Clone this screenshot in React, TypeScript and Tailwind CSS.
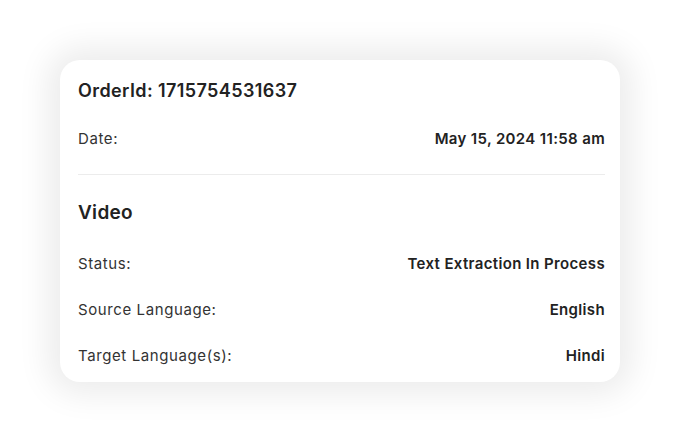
import React from 'react';

interface DetailRowProps {
  label: string;
  value: string;
  className?: string;
}

function DetailRow({ label, value, className = '' }: DetailRowProps) {
  return (
    <div className={`flex items-center justify-between h-5 ${className}`}>
      <span className="text-[15px] tracking-[0.6px] text-[#333333]">{label}</span>
      <span className="text-[15px] font-semibold tracking-[0.35px] text-[#222222]">{value}</span>
    </div>
  );
}

export default function App() {
  return (
    <div
      className="min-h-screen w-full bg-white flex items-center justify-center"
      style={{ fontFamily: 'Inter, "Open Sans", sans-serif' }}
    >
      <div className="w-[560px] h-[322px] bg-white rounded-[20px] shadow-[0_0_32px_12px_rgba(0,0,0,0.08)] pl-[18px] pr-[15px] pt-[18px] pb-4 flex flex-col">
        <h2 className="h-6 flex items-center text-[18px] font-semibold tracking-[0.4px] text-[#222222]">
          OrderId: 1715754531637
        </h2>
        <DetailRow label="Date:" value="May 15, 2024 11:58 am" className="mt-[27px]" />
        <div className="mt-[25px] border-t border-[#ececec]" />

        <h3 className="mt-[25px] h-[26px] flex items-center text-[19px] font-semibold tracking-[0.3px] text-[#222222]">
          Video
        </h3>
        <DetailRow label="Status:" value="Text Extraction In Process" className="mt-[28px]" />
        <DetailRow label="Source Language:" value="English" className="mt-[26px]" />
        <DetailRow label="Target Language(s):" value="Hindi" className="mt-[26px]" />
      </div>
    </div>
  );
}
